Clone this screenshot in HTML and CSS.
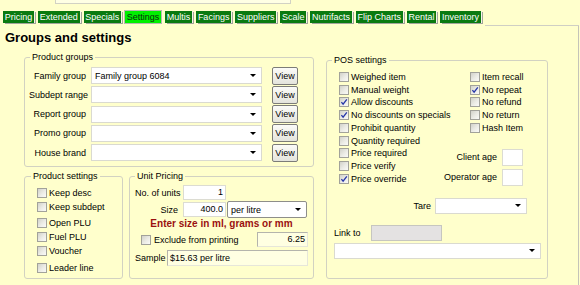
FILE: index.html
```html
<!DOCTYPE html>
<html>
<head>
<meta charset="utf-8">
<link rel="stylesheet" href="styles.css">
</head>
<body>
<div class="page">
  <div class="topfield"></div>
  <div class="tabs">
    <span class="tab">Pricing</span>
    <span class="tab">Extended</span>
    <span class="tab">Specials</span>
    <span class="tab active">Settings</span>
    <span class="tab">Multis</span>
    <span class="tab">Facings</span>
    <span class="tab">Suppliers</span>
    <span class="tab">Scale</span>
    <span class="tab">Nutrifacts</span>
    <span class="tab">Flip Charts</span>
    <span class="tab">Rental</span>
    <span class="tab">Inventory</span>
    <span class="tab-fill"></span>
  </div>
  <div class="panel">
    <h1 class="title">Groups and settings</h1>
    <div class="content">
      <div class="left">
        <fieldset class="box groups">
          <legend>Product groups</legend>
          <div class="grow"><span class="glabel">Family group</span><div class="combo gcombo"><span class="ctext">Family group 6084</span><i class="arrow"></i></div><button class="btn">View</button></div>
          <div class="grow"><span class="glabel">Subdept range</span><div class="combo gcombo"><span class="ctext"></span><i class="arrow"></i></div><button class="btn">View</button></div>
          <div class="grow"><span class="glabel">Report group</span><div class="combo gcombo"><span class="ctext"></span><i class="arrow"></i></div><button class="btn">View</button></div>
          <div class="grow"><span class="glabel">Promo group</span><div class="combo gcombo"><span class="ctext"></span><i class="arrow"></i></div><button class="btn">View</button></div>
          <div class="grow"><span class="glabel">House brand</span><div class="combo gcombo"><span class="ctext"></span><i class="arrow"></i></div><button class="btn">View</button></div>
        </fieldset>
        <div class="lower">
          <fieldset class="box psettings">
            <legend>Product settings</legend>
            <label class="chk"><span class="cb"></span>Keep desc</label>
            <label class="chk"><span class="cb"></span>Keep subdept</label>
            <label class="chk sp2"><span class="cb"></span>Open PLU</label>
            <label class="chk"><span class="cb"></span>Fuel PLU</label>
            <label class="chk"><span class="cb"></span>Voucher</label>
            <label class="chk sp3"><span class="cb"></span>Leader line</label>
          </fieldset>
          <fieldset class="box unit">
            <legend>Unit Pricing</legend>
            <div class="urow r1"><span class="ulabel">No. of units</span><span class="field num">1</span></div>
            <div class="urow r2"><span class="ulabel">Size</span><span class="field num">400.0</span><div class="combo pcombo"><span class="ctext">per litre</span><i class="arrow"></i></div></div>
            <div class="warn">Enter size in ml, grams or mm</div>
            <div class="urow r3"><label class="chk excl"><span class="cb"></span>Exclude from printing</label><span class="ro num rate">6.25</span></div>
            <div class="urow r4"><span class="slabel">Sample</span><span class="ro sample">$15.63 per litre</span></div>
          </fieldset>
        </div>
      </div>
      <fieldset class="box pos">
        <legend>POS settings</legend>
        <div class="poscols">
          <div class="pcol1">
            <label class="chk prow"><span class="cb"></span>Weighed item</label>
            <label class="chk prow"><span class="cb"></span>Manual weight</label>
            <label class="chk prow"><span class="cb on"><svg viewBox="0 0 8 8"><path d="M1.4 4.1 L3.1 6.2 L6.8 1.3"/></svg></span>Allow discounts</label>
            <label class="chk prow"><span class="cb on"><svg viewBox="0 0 8 8"><path d="M1.4 4.1 L3.1 6.2 L6.8 1.3"/></svg></span>No discounts on specials</label>
            <label class="chk prow"><span class="cb"></span>Prohibit quantity</label>
            <label class="chk prow"><span class="cb"></span>Quantity required</label>
            <label class="chk prow"><span class="cb"></span>Price required</label>
            <label class="chk prow"><span class="cb"></span>Price verify</label>
            <label class="chk prow"><span class="cb on"><svg viewBox="0 0 8 8"><path d="M1.4 4.1 L3.1 6.2 L6.8 1.3"/></svg></span>Price override</label>
          </div>
          <div class="pcol2">
            <label class="chk prow"><span class="cb"></span>Item recall</label>
            <label class="chk prow"><span class="cb on"><svg viewBox="0 0 8 8"><path d="M1.4 4.1 L3.1 6.2 L6.8 1.3"/></svg></span>No repeat</label>
            <label class="chk prow"><span class="cb"></span>No refund</label>
            <label class="chk prow"><span class="cb"></span>No return</label>
            <label class="chk prow"><span class="cb"></span>Hash Item</label>
            <div class="age age1"><span>Client age</span><span class="field agebox"></span></div>
            <div class="age age2"><span>Operator age</span><span class="field agebox"></span></div>
          </div>
        </div>
        <div class="tare"><span>Tare</span><div class="combo tcombo"><span class="ctext"></span><i class="arrow"></i></div></div>
        <div class="link"><span class="llabel">Link to</span><span class="disabled"></span></div>
        <div class="combo lcombo"><span class="ctext"></span><i class="arrow"></i></div>
      </fieldset>
    </div>
  </div>
</div>
</body>
</html>
```

FILE: styles.css
```css
html, body {
  margin: 0;
  padding: 0;
}
body {
  background: #FFFFCC;
  font-family: "Liberation Sans", Arial, sans-serif;
  font-size: 9px;
  color: #000;
  width: 580px;
  height: 285px;
  overflow: hidden;
}
.page {
  width: 580px;
}
.topfield {
  margin-left: 55px;
  width: 234px;
  height: 3px;
  background: #FFFFE4;
  border: 1px solid #d2d2c4;
  border-top: 0;
}
.tabs {
  display: flex;
  align-items: flex-start;
  box-sizing: border-box;
  width: 579px;
  height: 15px;
  margin-top: 7px;
  padding-left: 3px;
}
.tab {
  height: 12px;
  line-height: 12px;
  padding: 0 1.75px;
  background: #0A7A10;
  color: #fff;
  margin-right: 4px;
  white-space: nowrap;
  box-shadow: 1px 0 0 #f6f6e6, 2px 1px 0 #a4a49c;
}
.tab.active {
  background: #00F000;
  color: #0a2a0a;
  box-shadow: 0 0 0 1px #b8b8b0;
}
.tab-fill {
  flex: 1;
  align-self: stretch;
  border-bottom: 1px solid #cfcfc4;
}
.panel {
  width: 578px;
  height: 259px;
  border-right: 1px solid #c4c4b8;
}
.title {
  margin: 0;
  padding: 4px 0 0 5px;
  font-size: 13px;
  line-height: 15px;
  font-weight: bold;
}
.content {
  display: flex;
  align-items: flex-start;
  gap: 12px;
  padding: 6px 0 0 24px;
}
.left {
  width: 290px;
}
.box {
  margin: 0;
  border: 1px solid #D2D2C2;
  border-radius: 3px;
  min-width: 0;
}
.box legend {
  padding: 0 2px;
  line-height: 12px;
  font-size: 9px;
}
/* product groups */
.groups {
  padding: 4px 15px 5px 4px;
}
.groups legend {
  margin-left: 1px;
}
.grow {
  display: flex;
  align-items: center;
  height: 17px;
  margin-bottom: 2.25px;
}
.grow:last-child {
  margin-bottom: 0;
}
.glabel {
  width: 57px;
  text-align: right;
  white-space: nowrap;
  margin-right: 5px;
}
.combo {
  display: flex;
  align-items: center;
  box-sizing: border-box;
  height: 17px;
  background: #fff;
  border: 1px solid #dadad0;
}
.ctext {
  flex: 1;
  padding-left: 3px;
  white-space: nowrap;
  overflow: hidden;
}
.arrow {
  flex: none;
  width: 0;
  height: 0;
  border-left: 3px solid transparent;
  border-right: 3px solid transparent;
  border-top: 3px solid #000;
  margin-right: 5px;
}
.gcombo {
  width: 171px;
}
.btn {
  box-sizing: border-box;
  width: 26px;
  height: 18px;
  margin-left: 10px;
  padding: 0;
  font-family: inherit;
  font-size: 9px;
  color: #000;
  border: 1px solid #7c7c78;
  border-radius: 2px;
  background: linear-gradient(#fbfbf8, #e4e4dc);
}
/* lower row */
.lower {
  display: flex;
  gap: 6px;
  margin-top: 3px;
}
.psettings {
  box-sizing: border-box;
  width: 99px;
  padding: 4px 2px 3px 12px;
}
.psettings legend {
  margin-left: -6px;
}
.chk {
  display: flex;
  align-items: center;
  white-space: nowrap;
}
.psettings .chk {
  height: 14px;
}
.psettings .sp2 {
  margin-top: 2px;
}
.psettings .sp3 {
  margin-top: 3px;
}
.cb {
  flex: none;
  box-sizing: border-box;
  width: 10px;
  height: 10px;
  margin-right: 2px;
  border: 1px solid #a2a29a;
  background: linear-gradient(135deg, #d2d2ca 0%, #ececE6 55%, #fafaf8 100%);
  display: flex;
  align-items: center;
  justify-content: center;
}
.cb svg {
  width: 8px;
  height: 8px;
}
.cb svg path {
  fill: none;
  stroke: #2636a8;
  stroke-width: 1.3;
}
.unit {
  box-sizing: border-box;
  width: 185px;
  padding: 3px 5px 11px 5px;
}
.unit legend {
  margin-left: 0;
}
.urow {
  display: flex;
  align-items: center;
}
.r1 {
  height: 15px;
}
.r2 {
  height: 17px;
  margin-top: 1px;
}
.r3 {
  height: 15px;
  margin-top: 2px;
}
.r4 {
  height: 16px;
  margin-top: 3px;
}
.ulabel {
  width: 43px;
  text-align: right;
  margin-right: 5px;
  white-space: nowrap;
}
.field {
  box-sizing: border-box;
  display: block;
  background: #fff;
  border: 1px solid #dcdcd2;
}
.num {
  text-align: right;
  padding-right: 2px;
}
.r1 .field, .r2 .field {
  width: 43px;
  height: 15px;
  line-height: 13px;
}
.pcombo {
  width: 80px;
  margin-left: 1px;
  border: 1px solid #8e8e8a;
  border-radius: 2px;
}
.warn {
  height: 12px;
  line-height: 12px;
  text-align: center;
  color: #9A1010;
  font-weight: bold;
  font-size: 10px;
}
.excl {
  margin-left: 6px;
}
.excl .cb {
  margin-right: 3px;
}
.ro {
  box-sizing: border-box;
  display: block;
  height: 15px;
  line-height: 13px;
  border: 1px solid #e6e6da;
  border-top-color: #b4b4ac;
  border-left-color: #b4b4ac;
  background: #FFFFE2;
}
.rate {
  width: 51px;
  margin-left: auto;
}
.slabel {
  white-space: nowrap;
}
.sample {
  width: 141px;
  height: 16px;
  line-height: 14px;
  margin-left: auto;
  padding-left: 2px;
}
/* POS */
.pos {
  box-sizing: border-box;
  width: 222px;
  margin-top: 3px;
  padding: 4.6px 6px 19px 7px;
}
.pos legend {
  margin-left: -2px;
}
.poscols {
  display: flex;
  padding-left: 5px;
}
.pcol1 {
  width: 131px;
}
.pcol2 {
  width: 53px;
}
.prow {
  height: 12.75px;
}
.age {
  display: flex;
  align-items: center;
  justify-content: flex-end;
  margin-left: -50px;
  white-space: nowrap;
}
.age1 {
  margin-top: 14.6px;
}
.age2 {
  margin-top: 3px;
}
.agebox {
  width: 21px;
  height: 17px;
  margin-left: 5px;
}
.tare {
  display: flex;
  align-items: center;
  justify-content: flex-end;
  padding-right: 14px;
  margin-top: 11.6px;
}
.tcombo {
  width: 92px;
  height: 16px;
  margin-left: 4px;
}
.link {
  display: flex;
  align-items: center;
  margin-top: 11px;
}
.llabel {
  width: 37px;
}
.disabled {
  display: block;
  box-sizing: border-box;
  width: 71px;
  height: 16px;
  background: #E4E2E2;
  border: 1px solid #c6c6c0;
}
.lcombo {
  margin-top: 2px;
  width: 100%;
  height: 16px;
}
```
